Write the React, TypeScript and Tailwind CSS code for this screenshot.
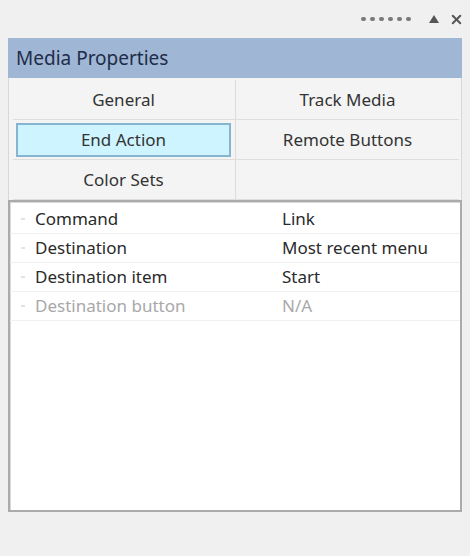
import { X } from "lucide-react";

const TABS = [
  ["General", "Track Media"],
  ["End Action", "Remote Buttons"],
  ["Color Sets", ""],
];

const PROPS = [
  { name: "Command", value: "Link" },
  { name: "Destination", value: "Most recent menu" },
  { name: "Destination item", value: "Start" },
  { name: "Destination button", value: "N/A", disabled: true },
];

export default function App() {
  return (
    <div
      className="flex h-[556px] w-[470px] flex-col bg-[#f0f0f0] text-[#2a2a2a]"
      style={{ fontFamily: '"Noto Sans", "Open Sans", sans-serif' }}
    >
      {/* title strip */}
      <div className="flex h-[38px] items-center justify-end pr-[6px]">
        <div className="flex gap-[4px]">
          {[0, 1, 2, 3, 4, 5].map((i) => (
            <span key={i} className="h-[4px] w-[5px] rounded-full bg-[#7a7a7a]" />
          ))}
        </div>
        <svg width="12" height="10" viewBox="0 0 12 10" className="ml-[17px]">
          <path d="M6 1 L11 9 L1 9 Z" fill="#555" />
        </svg>
        <X className="ml-[9px] h-[15px] w-[15px] text-[#555]" strokeWidth={3.2} />
      </div>

      <div className="mx-2 flex flex-1 flex-col">
        <div className="flex h-[40px] items-center bg-[#9fb6d4] px-[8px] text-[19px] text-[#1e2d4a]">
          Media Properties
        </div>

        {/* tab buttons */}
        <div className="border-x border-[#d8d8d8] bg-[#f4f4f4] pl-[4px] pr-[2px] pt-[2px]">
          {TABS.map((row, r) => (
            <div key={r} className="grid h-[40px] grid-cols-2 border-b border-[#dedede]">
              {row.map((t, c) => (
                <div
                  key={c}
                  className={
                    "flex items-center justify-center text-[17px] text-[#333] " +
                    (c === 0 ? "border-r border-[#dcdcdc] pr-[4px] pl-[3px]" : "")
                  }
                >
                  {t === "End Action" ? (
                    <div className="flex h-[34px] w-full items-center justify-center border-2 border-[#86b5cf] bg-[#cdf4ff]">
                      {t}
                    </div>
                  ) : (
                    t
                  )}
                </div>
              ))}
            </div>
          ))}
        </div>

        {/* property grid */}
        <div className="flex h-[312px] flex-col border-2 border-[#ababab] bg-white pt-[3px] shadow-[inset_1px_1px_0_#d8d8d8]">
          {PROPS.map((p) => (
            <div
              key={p.name}
              className={
                "flex h-[29px] items-center border-b border-[#f0f0f0] text-[17px] " +
                (p.disabled ? "text-[#a8a8a8]" : "text-[#2a2a2a]")
              }
            >
              <span className="ml-[11px] mr-[10px] h-[2px] w-[4px] bg-[#e2e2e2]" />
              <span className="w-[247px]">{p.name}</span>
              <span>{p.value}</span>
            </div>
          ))}
        </div>
        <div className="flex-1" />
      </div>
    </div>
  );
}
